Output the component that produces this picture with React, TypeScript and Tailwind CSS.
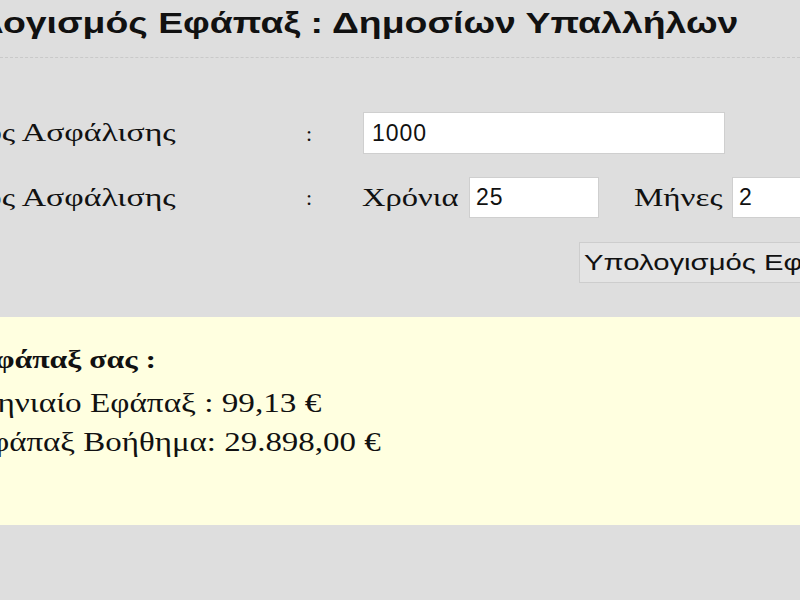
import React from 'react';

const serif = "font-['Liberation_Serif','Times_New_Roman',serif]";
const sans = "font-['Liberation_Sans',Arial,sans-serif]";

// the source page is rendered wide, so text glyphs are stretched horizontally
const wideR = 'inline-block origin-right';
const wideL = 'inline-block origin-left';

export default function App() {
  return (
    <div className={`w-[800px] h-[600px] overflow-hidden bg-[#dedede] text-[#111] ${serif}`}>
      {/* Header */}
      <div className="h-[58px] border-b border-dashed border-[#c9c9c9] flex items-end pb-[19px]">
        <div className={`w-[738px] shrink-0 flex justify-end whitespace-nowrap ${sans}`}>
          <h1 className={`${wideR} scale-x-[1.29] text-[29px] font-bold leading-none`}>
            Υπολογισμός Εφάπαξ : Δημοσίων Υπαλλήλων
          </h1>
        </div>
      </div>

      {/* Form */}
      <div className="pt-[54px]">
        <div className="flex items-center h-[42px]">
          <div className="w-[176px] shrink-0 flex justify-end whitespace-nowrap text-[25px]">
            <span className={`${wideR} scale-x-[1.35]`}>Μισθός Ασφάλισης</span>
          </div>
          <div className="w-[187px] shrink-0 pl-[130px] text-[22px]">:</div>
          <input
            readOnly
            value="1000"
            className={`w-[362px] h-[42px] bg-white border border-[#cfcfcf] px-[8px] text-[23px] tracking-[1px] outline-none ${sans}`}
          />
        </div>

        <div className="flex items-center h-[41px] mt-[23px]">
          <div className="w-[176px] shrink-0 flex justify-end whitespace-nowrap text-[25px]">
            <span className={`${wideR} scale-x-[1.35]`}>Χρόνος Ασφάλισης</span>
          </div>
          <div className="w-[186px] shrink-0 pl-[130px] text-[22px]">:</div>
          <div className="w-[107px] shrink-0 text-[25px] whitespace-nowrap">
            <span className={`${wideL} scale-x-[1.3]`}>Χρόνια</span>
          </div>
          <input
            readOnly
            value="25"
            className={`w-[130px] h-[41px] shrink-0 bg-white border border-[#cfcfcf] px-[6px] text-[23px] tracking-[1px] outline-none ${sans}`}
          />
          <div className="w-[133px] shrink-0 pl-[35px] text-[25px] whitespace-nowrap">
            <span className={`${wideL} scale-x-[1.32]`}>Μήνες</span>
          </div>
          <input
            readOnly
            value="2"
            className={`w-[130px] h-[41px] shrink-0 bg-white border border-[#cfcfcf] px-[6px] text-[23px] outline-none ${sans}`}
          />
        </div>

        <div className="flex mt-[24px] pl-[579px]">
          <button
            className={`h-[41px] w-[240px] pl-[4px] shrink-0 text-left whitespace-nowrap bg-[#e4e4e4] border border-[#cdcdcd] text-[22px] text-[#111] ${sans}`}
          >
            <span className={`${wideL} scale-x-[1.33]`}>Υπολογισμός Εφάπαξ</span>
          </button>
        </div>
      </div>

      {/* Result */}
      <div className="mt-[34px] h-[208px] bg-[#ffffe0] pt-[28px]">
        <div className="w-[156px] flex justify-end whitespace-nowrap text-[26px] font-bold leading-[30px]">
          <span className={`${wideR} scale-x-[1.22]`}>Το Εφάπαξ σας :</span>
        </div>
        <div className="w-[321px] flex justify-end whitespace-nowrap text-[27px] leading-[39px] mt-[9px]">
          <span className={`${wideR} scale-x-[1.23]`}>Μηνιαίο Εφάπαξ : 99,13 €</span>
        </div>
        <div className="w-[381px] flex justify-end whitespace-nowrap text-[27px] leading-[39px]">
          <span className={`${wideR} scale-x-[1.22]`}>Συνολικό Εφάπαξ Βοήθημα: 29.898,00 €</span>
        </div>
      </div>
    </div>
  );
}
